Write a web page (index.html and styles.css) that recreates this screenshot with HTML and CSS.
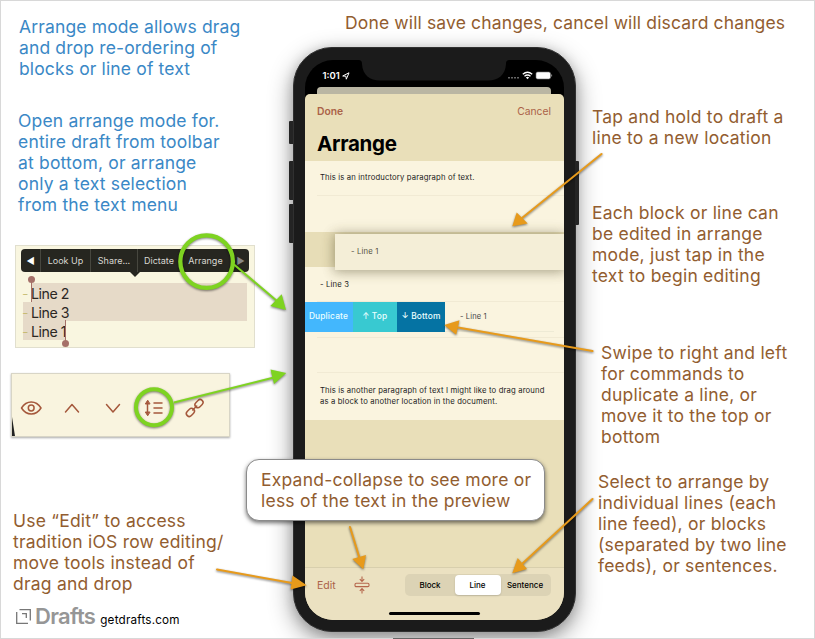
FILE: index.html
```html
<!DOCTYPE html>
<html lang="en">
<head>
<meta charset="utf-8">
<title>Drafts: Arrange mode</title>
<link rel="stylesheet" href="styles.css">
</head>
<body>
<main class="guide">
  <section class="left">
    <p class="note blue mode">Arrange mode allows drag<br>and drop re-ordering of<br>blocks or line of text</p>
    <p class="note blue open">Open arrange mode for.<br>entire draft from toolbar<br>at bottom, or arrange<br>only a text selection<br>from the text menu</p>
    <div class="selection">
      <div class="menu"><span class="prev">◀</span><span class="lookup">Look Up</span><span class="share">Share...</span><span class="dictate">Dictate</span><span class="arr">Arrange</span><span class="next">▶</span></div>
      <div class="lines">
        <div class="line first"><i>–</i><span>Line 2</span></div>
        <div class="line"><i>–</i><span>Line 3</span></div>
        <div class="line last"><i>–</i><span>Line 1</span></div>
      </div>
    </div>
    <div class="tools">
      <svg width="217" height="62" viewBox="12 374 217 62" fill="none" stroke="#a5583c" stroke-width="1.5" stroke-linecap="round" stroke-linejoin="round">
        <path d="M12 417L15 436H12Z" fill="#222" stroke="none"/>
        <path d="M21.5 408C26.5 400 36 400 41 408C36 416 26.500 416 21.500 408Z"/><circle cx="31.200" cy="408" r="2.900"/>
        <path d="M65.500 412L72 404.500L78.500 412M106.500 404.500L113 412L119.500 404.500"/>
        <path d="M147.500 402V413M154 403H162M154 408H162M154 413H162"/>
        <path d="M147.500 400.500L145.300 404H149.700ZM147.500 415.500L145.300 412H149.700Z" fill="#a5583c" stroke-width="1"/>
        <rect x="-4.500" y="-2.900" width="9" height="5.800" rx="2.900" transform="translate(190.400 412.400) rotate(-46)"/>
        <rect x="-4.500" y="-2.900" width="9" height="5.800" rx="2.900" transform="translate(199 403.600) rotate(-46)"/>
        <path d="M192.700 410L196.700 406"/>
      </svg>
    </div>
    <p class="note edit-note">Use “Edit” to access<br>tradition iOS row editing/<br>move tools instead of<br>drag and drop</p>
    <footer class="brand">
      <svg width="15" height="15" viewBox="0 0 15 15" fill="none" stroke="#777" stroke-width="1.300"><path d="M3.500 .7H14.300V11.500M.7 3V14.300H12M6 4.700H10.300V9"/></svg>
      <strong>Drafts</strong><span>getdrafts.com</span>
    </footer>
  </section>
  <header class="note headline">Done will save changes, cancel will discard changes</header>
  <section class="phone">
    <i class="key mute"></i><i class="key up"></i><i class="key down"></i><i class="key power"></i>
    <div class="screen">
      <svg class="notch" width="152" height="21" viewBox="0 0 152 21"><path d="M0 0C3 0 4 1 4 4C4.500 15 12 20.500 22 20.500H130C140 20.500 147.500 15 148 4C148 1 149 0 152 0Z" fill="#1b1b1b"/></svg>
      <div class="status">
        <span>1:01</span>
        <svg class="loc" width="8" height="8" viewBox="0 0 8 8"><path d="M.7 4L7 .8L4.300 7.200L3.900 4.200Z" fill="none" stroke="#fff" stroke-width="1"/></svg>
        <svg class="signals" width="45" height="9" viewBox="0 0 45 9">
          <g fill="#666"><rect x="0" y="6" width="2" height="1.500"/><rect x="3" y="6" width="2" height="1.500"/><rect x="6" y="6" width="2" height="1.500"/><rect x="9" y="6" width="2" height="1.500"/></g>
          <g fill="none" stroke="#fff" stroke-width="1.400"><path d="M14.800 3.200Q19.500-.8 24.200 3.200M16.500 5.200Q19.500 2.800 22.500 5.200"/></g>
          <path d="M17.900 6.500Q19.500 5.200 21.100 6.500L19.500 8.300Z" fill="#fff"/>
          <rect x="28" y="1" width="14.500" height="7" rx="1.700" fill="#fff" stroke="#777" stroke-width=".6"/><path d="M43.600 3.500v2" stroke="#888"/>
        </svg>
      </div>
      <div class="behind"></div>
      <div class="sheet">
        <div class="nav"><b>Done</b><span>Cancel</span></div>
        <h1>Arrange</h1>
        <div class="rows">
          <div class="row intro">This is an introductory paragraph of text.</div>
          <div class="row blank"></div>
          <div class="slot"><div class="lifted">- Line 1</div></div>
          <div class="row three">- Line 3</div>
          <div class="swipe"><span class="dup">Duplicate</span><span class="top">↑ Top</span><span class="bottom">↓ Bottom</span><em>- Line 1</em></div>
          <div class="row thin"></div>
          <div class="row empty"></div>
          <div class="row para">This is another paragraph of text I might like to drag around<br>as a block to another location in the document.</div>
        </div>
        <div class="toolbar">
          <span class="edit">Edit</span>
          <svg class="collapse" width="16" height="18" viewBox="0 0 16 18" fill="none" stroke="#b5664c" stroke-width="1.100"><rect x="1" y="7.200" width="14" height="3.400" rx="1.200"/><path d="M8 .5V5.200M5.800 3.200L8 5.400L10.200 3.200M8 17.500V12.600M5.800 14.800L8 12.600L10.200 14.800"/></svg>
          <div class="segments"><span>Block</span><span class="on">Line</span><span>Sentence</span></div>
        </div>
        <div class="home"></div>
      </div>
    </div>
  </section>
  <section class="right">
    <p class="note tap">Tap and hold to draft a<br>line to a new location</p>
    <p class="note each">Each block or line can<br>be edited in arrange<br>mode, just tap in the<br>text to begin editing</p>
    <p class="note swipe-note">Swipe to right and left<br>for commands to<br>duplicate a line, or<br>move it to the top or<br>bottom</p>
    <p class="note select">Select to arrange by<br>individual lines (each<br>line feed), or blocks<br>(separated by two line<br>feeds), or sentences.</p>
  </section>
  <svg class="arrows" width="815" height="639" viewBox="0 0 815 639">
    <g stroke="#e79a1b" stroke-width="2" stroke-linecap="round" fill="#e79a1b">
      <path d="M601.500 154L522 218M592.500 351L458 327.500M592.500 499L522 564M350 527L359.500 558M217 569.500L292 583"/>
      <path stroke="none" d="M512.300 226.300L516.700 212.500L527.700 223.500ZM444.300 325L459.500 320.300L456.200 334.700ZM512.300 573.300L517.700 558L527 569ZM363.300 569.300L352.300 559L366 555ZM306.700 585.300L292.500 575.500L290.600 589.500Z"/>
    </g>
    <g stroke="#7ed321" stroke-width="2" fill="#7ed321">
      <path d="M234 264.500L277 301M174 402.500L274 377.500"/>
      <path stroke="none" d="M286 310L281.700 294.300L270.300 306ZM286.300 373L270.500 369.500L274 384Z"/>
      <circle cx="206.600" cy="261.600" r="26.300" fill="none" stroke-width="4.300"/>
      <circle cx="154" cy="407.200" r="18" fill="none" stroke-width="4"/>
    </g>
  </svg>
  <aside class="note bubble">Expand-collapse to see more or<br>less of the text in the preview</aside>
  <i class="sliver"></i>
</main>
</body>
</html>
```

FILE: styles.css
```css
* { box-sizing: border-box; }
body { margin: 0; background: #fff; font-family: Inter, "Liberation Sans", sans-serif; }
p, h1 { margin: 0; }
.guide { position: relative; width: 815px; height: 639px; overflow: hidden; display: grid; grid-template-columns: 293px 283px 239px; grid-template-rows: 47px 592px; border: 0; }
.guide::after { content: ""; position: absolute; inset: 0; border: 1px solid #d8d8d8; }
.note { color: #925d30; font-size: 17.5px; line-height: 21px; letter-spacing: .22px; white-space: nowrap; }
.blue { color: #3a88c6; }

.left { grid-row: 1 / 3; position: relative; z-index: 1; padding-top: 15.5px; }
.mode { margin-left: 19px; letter-spacing: .14px; }
.open { margin: 31px 0 0 18px; letter-spacing: .18px; }
.selection { margin: 30px 0 0 15px; width: 240px; height: 103px; background: #f9f6e0; border: 1px solid #e1dfce; padding: 3px 5px; }
.menu { position: relative; display: flex; width: 228px; height: 23px; border-radius: 4px; background: #262620; color: #d8d8d2; font-size: 9px; line-height: 23px; text-align: center; white-space: nowrap; }
.menu::after { content: ""; position: absolute; left: 109px; top: 23px; border: 5px solid transparent; border-top-color: #262620; border-bottom: 0; }
.menu span + span { border-left: 1px solid #47473f; }
.prev { width: 19px; color: #fff; }
.lookup { width: 50px; }
.share { width: 47px; }
.dictate { width: 43px; }
.menu .arr { width: 51px; border: 0; }
.menu .next { width: 18px; color: #888; }
.lines { margin: 11px 0 0 2px; width: 224px; }
.line { position: relative; height: 19px; display: flex; background: #e6dac8; color: #2b2723; font-size: 14.2px; line-height: 21px; letter-spacing: -.45px; white-space: nowrap; }
.line i { flex: none; width: 8px; color: #c0b460; font-style: normal; font-size: 9px; }
.first { background: linear-gradient(90deg, transparent 8px, #e6dac8 8px); }
.last { width: 43px; }
.first::before, .last::before { content: ""; position: absolute; width: 1px; height: 21px; background: #a57068; left: 8px; top: -2px; }
.first::after, .last::after { content: ""; position: absolute; width: 7px; height: 7px; border-radius: 50%; background: #a57068; left: 5px; top: -7px; }
.last::before { left: 42px; top: -1px; }
.last::after { left: 39px; top: 19px; }
.tools { margin: 26px 0 0 12px; width: 217px; height: 62px; background: #f9f4df; box-shadow: 0 0 0 1px #d8d5c6, 0 1px 2px 1px #aaa; }
.tools svg { display: block; }
.edit-note { margin: 74px 0 0 13px; }
.brand { display: flex; align-items: baseline; margin: 8px 0 0 16px; white-space: nowrap; line-height: 28px; }
.brand strong { margin-left: 4px; color: #969696; font-size: 22px; font-weight: 600; letter-spacing: -.7px; }
.brand span { margin-left: 5px; font-size: 11.7px; letter-spacing: .2px; }

.headline { grid-column: 2 / 4; z-index: 1; padding: 12px 0 0 52px; letter-spacing: .14px; }
.phone { position: relative; grid-column: 2; grid-row: 2; width: 283px; height: 584.5px; border-radius: 39px; background: #1b1b1b; border: 1px solid #303030; padding: 12px 11px 11px 10.5px; box-shadow: 0 8px 24px rgba(0,0,0,.42), 0 2px 12px rgba(0,0,0,.15); }
.key { position: absolute; left: -5px; width: 4px; background: #242424; border-radius: 1px 0 0 1px; }
.mute { top: 73px; height: 23px; }
.up { top: 113px; height: 39px; }
.down { top: 156px; height: 39px; }
.power { left: 281px; top: 113px; height: 64px; border-radius: 0 1px 1px 0; }
.screen { position: relative; height: 559.5px; background: #000; border-radius: 28px; overflow: hidden; display: flex; flex-direction: column; }
.notch { position: absolute; left: 53.5px; top: 0; }
.status { display: flex; align-items: center; height: 27px; padding: 4px 11px 0 18px; color: #fff; font-size: 9.5px; font-weight: 600; flex: none; }
.loc { margin-left: 2px; }
.signals { margin-left: auto; }
.behind { flex: none; margin: 0 13px 0 12px; height: 7px; background: #bab6a3; border-radius: 4px 4px 0 0; }
.sheet { flex: 1; display: flex; flex-direction: column; background: #e9dfb9; border-radius: 5px 5px 0 0; }
.nav { display: flex; justify-content: space-between; padding: 9px 13px 0 12.500px; height: 35px; color: #ab6248; font-size: 10.3px; line-height: 17px; }
.nav b { font-weight: 600; }
h1 { padding-left: 12.5px; height: 32px; font-size: 20.5px; line-height: 30px; font-weight: 700; letter-spacing: -.3px; }
.rows { background: #faf4df; height: 258.500px; font-size: 7.7px; line-height: 11px; letter-spacing: .15px; color: #222; white-space: nowrap; }
.row { position: relative; padding-left: 15.5px; }
.row::after { content: ""; position: absolute; left: 12px; right: 0; bottom: 0; height: 1px; background: #f1ead4; }
.intro { height: 35px; padding-top: 11px; }
.blank { height: 36px; }
.blank::after, .para::after { display: none; }
.slot { height: 35px; background: #e7ddb7; padding: 2px 0 0 30.500px; }
.lifted { position: relative; z-index: 1; height: 36px; padding-left: 16px; line-height: 35px; background: #f4eed7; color: #55513f; box-shadow: 0 1px 10px 1px rgba(85,80,45,.38), 0 0 16px rgba(85,80,45,.16); }
.three { height: 35px; padding-top: 12px; }
.swipe { display: flex; height: 30px; line-height: 29px; color: #eaffff; font-size: 8.400px; text-align: center; }
.swipe span { font-weight: 500; }
.dup { width: 48px; background: #43b7fd; }
.top { width: 44.500px; background: #38c9d1; }
.bottom { width: 48px; background: #0573a3; }
.swipe em { flex: 1; margin-right: 10px; padding-left: 15px; text-align: left; font-style: normal; font-size: 7.500px; color: #444; border-bottom: 1px solid #eeead5; }
.thin { height: 6px; }
.empty { height: 35px; }
.para { padding-top: 11.500px; line-height: 11.500px; }
.toolbar { display: flex; align-items: center; margin-top: auto; height: 36px; padding: 0 13.500px 0 12.500px; border-top: 1px solid #d8cfad; background: #ebe1c1; flex: none; }
.edit { width: 37px; color: #ab6248; font-size: 10.500px; }
.segments { display: flex; margin-left: auto; width: 146px; height: 22px; padding: 1px; border-radius: 5px; background: #dcd3b5; font-size: 8px; font-weight: 500; line-height: 20px; text-align: center; }
.segments span { flex: 1; }
.segments .on { flex: none; width: 46px; border-radius: 4px; background: #fff; box-shadow: 0 1px 2px rgba(0,0,0,.15); }
.home { height: 17px; background: #ebe1c1; padding: 9px 84px 0; flex: none; }
.home::before { content: ""; display: block; height: 3px; border-radius: 2px; background: #000; }

.right { grid-column: 3; grid-row: 2; position: relative; z-index: 1; padding-top: 58.5px; }
.tap { margin-left: 16px; }
.each { margin: 54px 0 0 16px; }
.swipe-note { margin: 56px 0 0 25px; }
.select { margin: 24px 0 0 22px; }
.arrows { position: absolute; left: 0; top: 0; z-index: 2; filter: drop-shadow(0 1px 1px rgba(0,0,0,.5)); }
.bubble { position: absolute; z-index: 3; left: 246px; top: 459px; width: 299px; height: 62px; padding: 9px 0 0 14px; border: 1px solid #8b8b8b; border-radius: 13px; background: #fff; box-shadow: 0 2px 4px rgba(0,0,0,.55); }
.sliver { position: absolute; z-index: 4; left: 393px; top: 638px; width: 81px; height: 1px; background: #666; }
```
